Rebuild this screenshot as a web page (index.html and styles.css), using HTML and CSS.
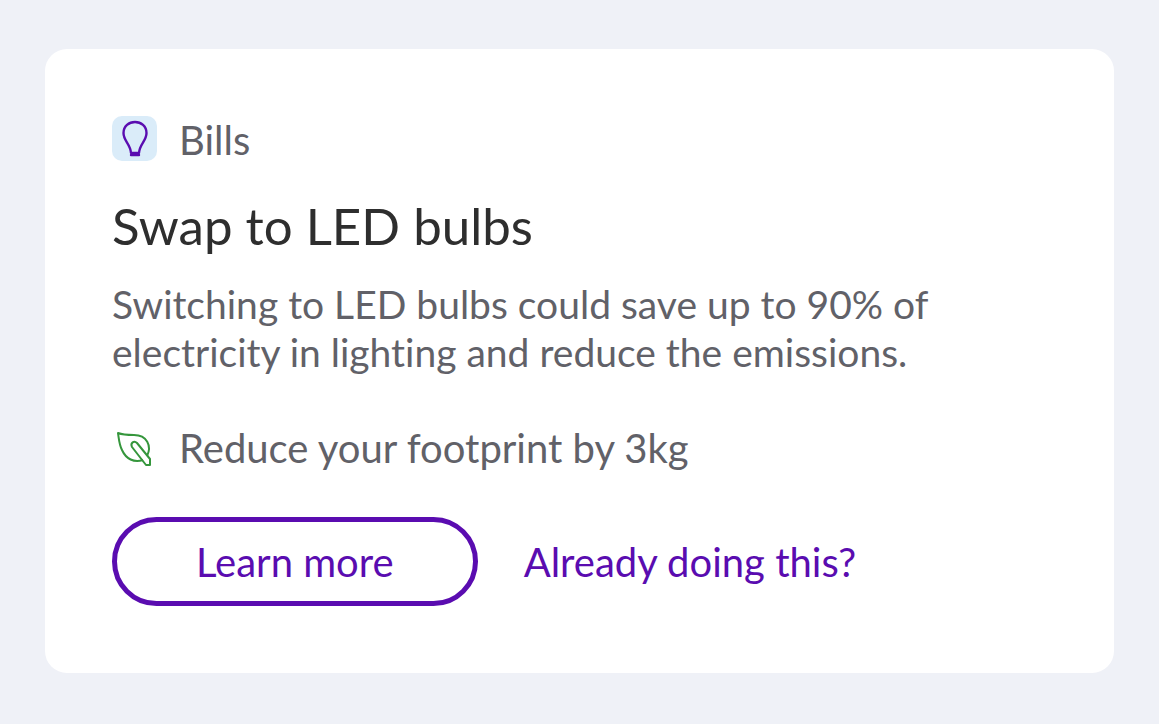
FILE: index.html
```html
<!DOCTYPE html>
<html lang="en">
  <head>
    <meta charset="utf-8">
    <title>Swap to LED bulbs</title>
    <link rel="stylesheet" href="styles.css">
  </head>

  <body>
    <main class="card">
      <div class="row category">
        <span class="icon icon-bulb">
          <svg viewBox="0 0 45 45" fill="none" stroke="#5a0cb0" stroke-width="2.4" stroke-linejoin="round" stroke-linecap="round">
            <path d="M19 37 C18.5 28 11.5 25 11.5 17 C11.5 10 17 6 23 6 C29 6 34.5 10 34.5 17 C34.5 25 27.5 28 27 37 Z" />
            <path d="M19 39 H27" />
          </svg>
        </span>
        <span>Bills</span>
      </div>

      <h1 class="title">Swap to LED bulbs</h1>
      <p class="text">Switching to LED bulbs could save up to 90% of electricity in lighting and reduce the emissions.</p>

      <div class="row footprint">
        <span class="icon">
          <svg viewBox="0 0 45 45" fill="none" stroke="#35963c" stroke-width="2" stroke-linejoin="round">
            <path d="M35 30 C40 20 35 9 22 9 C16 9 11 9 6 7 C7 13 7 18 10 24 C14 33 22 37 31 34" />
            <path d="M34 39 L20 21 C18 17 22 14 25 17 L38 33 V39 Z" />
          </svg>
        </span>
        <span>Reduce your footprint by 3kg</span>
      </div>

      <div class="actions">
        <button class="btn" type="button">Learn more</button>
        <a class="link" href="#">Already doing this?</a>
      </div>
    </main>
  </body>
</html>
```

FILE: styles.css
```css
body {
  margin: 0;
  padding: 49px 45px;
  background-color: #eff1f7;
  color: #616168;
  font-family: Lato, "Open Sans", sans-serif;
  font-size: 40px;
  font-variant-ligatures: none;
  line-height: 48px;
}

.card {
  padding: 67px;
  border-radius: 22px;
  background-color: #fff;
}

.row {
  display: flex;
  align-items: center;
  gap: 22px;
}

.category {
  align-items: flex-start;
}

/* Icons */
.icon {
  width: 45px;
  height: 45px;
  border-radius: 10px;
}

.icon svg {
  display: block;
}

.icon-bulb {
  background-color: #daecf9;
}

/* Text */
.title {
  margin: 32px 0 24px;
  color: #2e2e2e;
  font-size: 51px;
  font-weight: 400;
  line-height: 60px;
}

.text {
  max-width: 860px;
  margin: 0;
  font-size: 39px;
}

.footprint {
  margin: 48px 0 45px;
}

/* Buttons */
.actions {
  display: flex;
  align-items: center;
  gap: 46px;
}

.btn {
  padding: 16px 79px 15px;
  border: 5px solid #5a0cb0;
  border-radius: 45px;
  background-color: #fff;
  color: #5a0cb0;
  font: inherit;
  cursor: pointer;
}

.link {
  color: #5a0cb0;
  text-decoration: none;
}
```
